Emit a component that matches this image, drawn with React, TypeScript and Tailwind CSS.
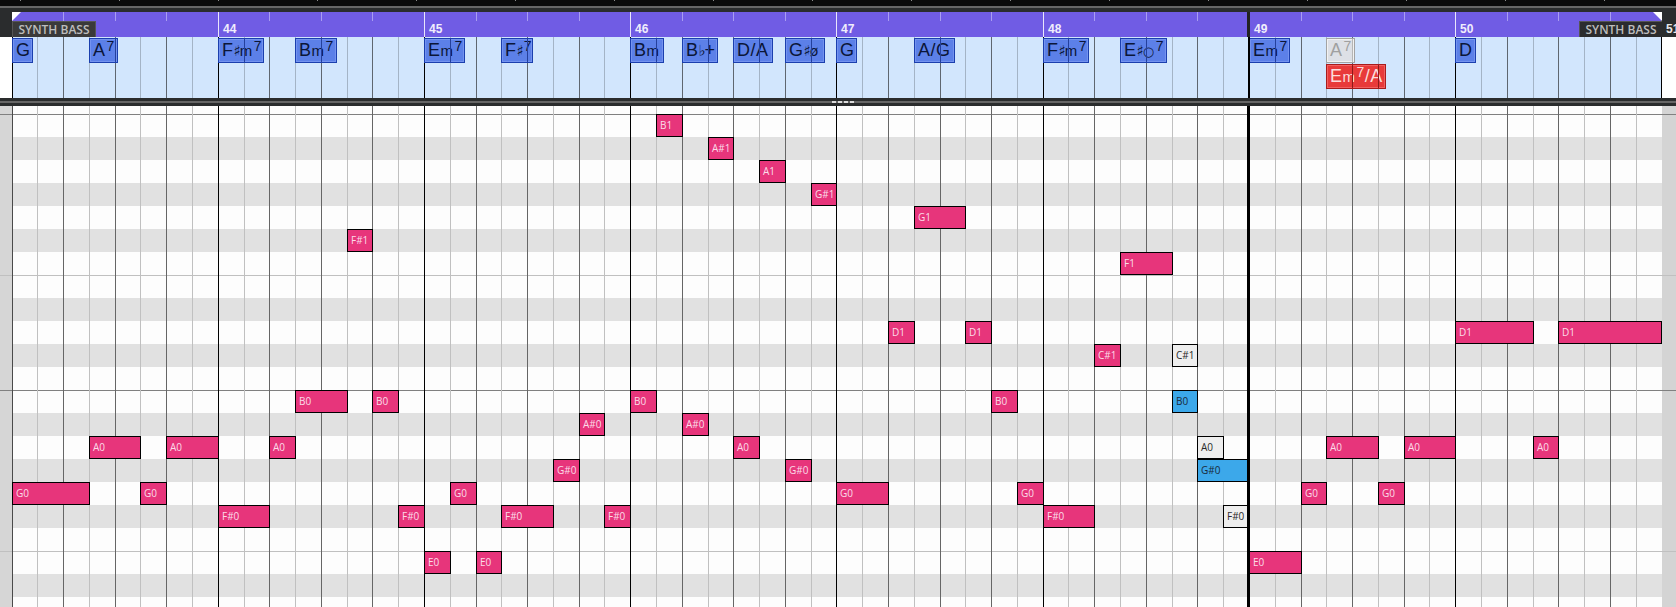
// App.tsx - piano roll with chord track
const SLOT = 25.78;
const SLOT_COUNT = 64;
const slotX = (i: number) => Math.floor(12 + SLOT * i);
const slots = Array.from({ length: SLOT_COUNT }, (_, i) => i);
const slotWidth = (i: number) => slotX(i + 1) - slotX(i);

const ROW_H = 23;
const FIRST_ROW_Y = 8; // B1 row, measured from the top of the roll

type Row = { name: string; dark?: boolean; line?: "strong" | "soft" };

// top to bottom, C2 is cut off by the divider
const rows: Row[] = [
  { name: "B1", line: "strong" },
  { name: "A#1", dark: true },
  { name: "A1" },
  { name: "G#1", dark: true },
  { name: "G1" },
  { name: "F#1", dark: true },
  { name: "F1" },
  { name: "E1", line: "soft" },
  { name: "D#1", dark: true },
  { name: "D1" },
  { name: "C#1", dark: true },
  { name: "C1" },
  { name: "B0", line: "strong" },
  { name: "A#0", dark: true },
  { name: "A0" },
  { name: "G#0", dark: true },
  { name: "G0" },
  { name: "F#0", dark: true },
  { name: "F0" },
  { name: "E0", line: "soft" },
  { name: "D#0", dark: true },
  { name: "D0" },
];

type Note = [string, number, number, ("white" | "blue")?];

const notes: Note[] = [
  ["G0", 0, 3], ["A0", 3, 2], ["G0", 5, 1], ["A0", 6, 2],
  ["F#0", 8, 2], ["A0", 10, 1], ["B0", 11, 2], ["F#1", 13, 1], ["B0", 14, 1], ["F#0", 15, 1],
  ["E0", 16, 1], ["G0", 17, 1], ["E0", 18, 1], ["F#0", 19, 2], ["G#0", 21, 1], ["A#0", 22, 1], ["F#0", 23, 1],
  ["B0", 24, 1], ["B1", 25, 1], ["A#0", 26, 1], ["A#1", 27, 1], ["A0", 28, 1], ["A1", 29, 1], ["G#0", 30, 1], ["G#1", 31, 1],
  ["G0", 32, 2], ["D1", 34, 1], ["G1", 35, 2], ["D1", 37, 1], ["B0", 38, 1], ["G0", 39, 1],
  ["F#0", 40, 2], ["C#1", 42, 1], ["F1", 43, 2], ["C#1", 45, 1, "white"], ["B0", 45, 1, "blue"],
  ["A0", 46, 1, "white"], ["G#0", 46, 2, "blue"], ["F#0", 47, 1, "white"],
  ["E0", 48, 2], ["G0", 50, 1], ["A0", 51, 2], ["G0", 53, 1], ["A0", 54, 2],
  ["D1", 56, 3], ["A0", 59, 1], ["D1", 60, 4],
];

const noteColors = {
  pink: "bg-[#e7357b] text-[#fbdce8]",
  white: "bg-[#eeeeee] text-[#2a2a2a]",
  blue: "bg-[#3ca8ea] text-[#1a2a3a]",
};

type Chord = {
  slot: number;
  width: number;
  label: React.ReactNode;
  kind?: "gray" | "red";
  second?: boolean;
};

const Sup = () => <span className="relative -top-[5px] ml-px text-[14px]">7</span>;
const M = () => <span className="text-[15px]">m</span>;
const Acc = ({ c }: { c: string }) => (
  <span className="text-[15px] tracking-[-1px] font-['DejaVu_Sans',sans-serif]">{c}</span>
);

const chords: Chord[] = [
  { slot: 0, width: 21, label: "G" },
  { slot: 3, width: 29, label: <>A<Sup /></> },
  { slot: 8, width: 46, label: <>F<Acc c="♯" /><M /><Sup /></> },
  { slot: 11, width: 42, label: <>B<M /><Sup /></> },
  { slot: 16, width: 41, label: <>E<M /><Sup /></> },
  { slot: 19, width: 32, label: <>F<Acc c="♯" /><Sup /></> },
  { slot: 24, width: 34, label: <>B<M /></> },
  { slot: 26, width: 36, label: <>B<Acc c="♭" />+</> },
  { slot: 28, width: 40, label: "D/A" },
  { slot: 30, width: 40, label: <>G<Acc c="♯" /><span className="font-['DejaVu_Sans',sans-serif] text-[14px]">ø</span></> },
  { slot: 32, width: 21, label: "G" },
  { slot: 35, width: 41, label: "A/G" },
  { slot: 40, width: 46, label: <>F<Acc c="♯" /><M /><Sup /></> },
  { slot: 43, width: 47, label: <>E<Acc c="♯" /><span className="font-['DejaVu_Sans',sans-serif] text-[13px]">○</span><Sup /></> },
  { slot: 48, width: 41, label: <>E<M /><Sup /></> },
  { slot: 51, width: 29, label: <>A<Sup /></>, kind: "gray" },
  { slot: 51, width: 60, label: <>E<M /><Sup />/A</>, kind: "red", second: true },
  { slot: 56, width: 21, label: "D" },
];

const chordStyles = {
  blue: { box: "border-[#1b3fae] bg-[#5c80e8] text-[#0b1638] shadow-[inset_0_0_0_1px_#7493ef]", line: "bg-[#24409c]" },
  gray: { box: "border-[#a3a3a3] bg-[#dde0e6] text-[#a0a0a0] shadow-[inset_0_0_0_1px_#f2f2f2]", line: "bg-[#b5b5b5]" },
  red: { box: "border-[#a81c1c] bg-[#e83a3a] text-[#fbdcdc] shadow-[inset_0_0_0_1px_#f26060]", line: "bg-[#8d1a1a]" },
};

const barNumbers: Record<number, number> = { 8: 44, 16: 45, 24: 46, 32: 47, 40: 48, 48: 49, 56: 50 };

function SectionLabel({ className }: { className: string }) {
  return (
    <div className={`absolute bottom-0 h-4 flex items-center justify-center border-t border-[#555] text-[12px] font-semibold text-[#bdbdbd] font-['Open_Sans',sans-serif] ${className}`}>
      SYNTH BASS
    </div>
  );
}

function Ruler() {
  return (
    <div className="relative flex h-[25px] bg-[#2a2c2d] pl-3">
      <div className="flex bg-[#705ce4]">
        {slots.map((i) => (
          <div key={i} className="flex shrink-0" style={{ width: slotWidth(i) }}>
            {i % 8 === 0 && i > 0 && <div className="h-full w-px shrink-0 bg-[#e9e6fb]" />}
            {i % 2 === 0 && i % 8 !== 0 && <div className="h-[9px] w-px shrink-0 bg-[#a99df0]" />}
            {barNumbers[i] && (
              <span className="ml-1 mt-[9px] text-[12px] leading-4 font-bold text-[#f0eefc] font-['Liberation_Sans',sans-serif]">
                {barNumbers[i]}
              </span>
            )}
          </div>
        ))}
      </div>
      <span className="ml-[5px] mt-[9px] text-[12px] leading-4 font-bold text-[#e8e8e8] font-['Liberation_Sans',sans-serif]">51</span>
      <div className="absolute left-3 top-0 size-0 border-t-[9px] border-r-[9px] border-t-white border-r-transparent" />
      <div className="absolute left-[1653px] top-0 size-0 border-t-[9px] border-l-[9px] border-t-white border-l-transparent" />
      <SectionLabel className="left-3 w-[84px] bg-[#3a3a3a] border-x" />
      <SectionLabel className="left-[1579px] w-[83px] bg-[#2b2c2e] border-l" />
      <div className="absolute left-[1247px] top-0 h-full w-[3px] bg-[#222]" />
    </div>
  );
}

function ChordBox({ chord }: { chord: Chord }) {
  const left = slotX(chord.slot);
  const style = chordStyles[chord.kind ?? "blue"];
  const inner = slots.filter((i) => slotX(i) > left + 1 && slotX(i) < left + chord.width - 2);
  return (
    <div
      className={`absolute h-[25px] overflow-hidden border pl-[3px] text-[18px] leading-[23px] tracking-[0.5px] whitespace-nowrap font-['Liberation_Sans',sans-serif] ${style.box} ${chord.second ? "top-[27px]" : "top-px"}`}
      style={{ left: left - 12, width: chord.width }}
    >
      {chord.label}
      {inner.map((i) => (
        <div key={i} className={`absolute inset-y-0 w-px ${style.line}`} style={{ left: slotX(i) - left - 1 }} />
      ))}
    </div>
  );
}

function ChordTrack() {
  const lineColor = (i: number) =>
    i % 8 === 0 ? "border-black" : i % 2 === 0 ? "border-[#5f6770]" : "border-[#a4b4c6]";
  return (
    <div className="relative h-[61px] bg-white pl-3 pr-[14px]">
      <div className="relative flex h-full border-r border-black bg-[#d2e6fd]">
        {slots.map((i) => (
          <div key={i} className={`shrink-0 border-l ${lineColor(i)}`} style={{ width: slotWidth(i) }} />
        ))}
        {chords.map((c, n) => (
          <ChordBox key={n} chord={c} />
        ))}
      </div>
      <div className="absolute left-[1248px] top-0 h-full w-[2px] bg-black" />
    </div>
  );
}

function Divider() {
  return (
    <div className="relative h-2 bg-[#2a2c2d] pt-[3px]">
      <div className="h-[2px] bg-[#666666]" />
      <div className="absolute left-[832px] top-[3px] flex gap-[2px]">
        <div className="h-[2px] w-1 bg-[#dcdcdc]" />
        <div className="h-[2px] w-1 bg-[#dcdcdc]" />
        <div className="h-[2px] w-1 bg-[#dcdcdc]" />
        <div className="h-[2px] w-1 bg-[#dcdcdc]" />
      </div>
    </div>
  );
}

function RollRow({ row, height }: { row?: Row; height: number }) {
  const line =
    row?.line === "strong" ? "border-t border-[#808080]" : row?.line === "soft" ? "border-t border-[#c0c0c0]" : "";
  return (
    <div className={`flex ${line}`} style={{ height }}>
      <div className="w-3 bg-[#d6d6d6]" />
      <div className={`flex-1 ${row?.dark ? "bg-[#e1e1e1]" : "bg-[#fdfdfd]"}`} />
      <div className="w-[14px] bg-[#d4d4d4]" />
    </div>
  );
}

function Roll() {
  const lineColor = (i: number) =>
    i === 0 ? "border-[#4a4a4a]" : i % 8 === 0 ? "border-black" : i % 2 === 0 ? "border-[#666666]" : "border-[#c0c0c0]";
  return (
    <div className="relative h-[501px] overflow-hidden">
      <RollRow height={FIRST_ROW_Y} />
      {rows.map((r) => (
        <RollRow key={r.name} row={r} height={ROW_H} />
      ))}
      <div className="absolute inset-y-0 left-3 flex">
        {slots.map((i) => (
          <div key={i} className={`shrink-0 border-l ${lineColor(i)}`} style={{ width: slotWidth(i) }} />
        ))}
      </div>
      {notes.map(([name, slot, len, color], n) => (
        <div
          key={n}
          className={`absolute flex items-center border border-black pl-[3px] text-[10px] font-['Open_Sans',sans-serif] ${noteColors[color ?? "pink"]}`}
          style={{
            left: slotX(slot),
            top: FIRST_ROW_Y + rows.findIndex((r) => r.name === name) * ROW_H,
            width: slotX(slot + len) - slotX(slot) + 1,
            height: ROW_H,
          }}
        >
          {name}
        </div>
      ))}
      <div className="absolute inset-y-0 left-[1247px] w-[3px] bg-black" />
    </div>
  );
}

function TopStrip() {
  return (
    <div className="h-3 bg-[#2a2c2d]">
      <div className="flex h-[6px] bg-[#0a0a0a] pl-5">
        {Array.from({ length: 17 }, (_, i) => (
          <div key={i} className="h-px w-[99px] shrink-0 border-l border-[#8a8a8a]" />
        ))}
      </div>
      <div className="h-[2px] bg-[#666666]" />
    </div>
  );
}

export default function App() {
  return (
    <div className="h-[607px] w-[1676px] overflow-hidden bg-[#2a2c2d]">
      <TopStrip />
      <Ruler />
      <ChordTrack />
      <Divider />
      <Roll />
    </div>
  );
}
